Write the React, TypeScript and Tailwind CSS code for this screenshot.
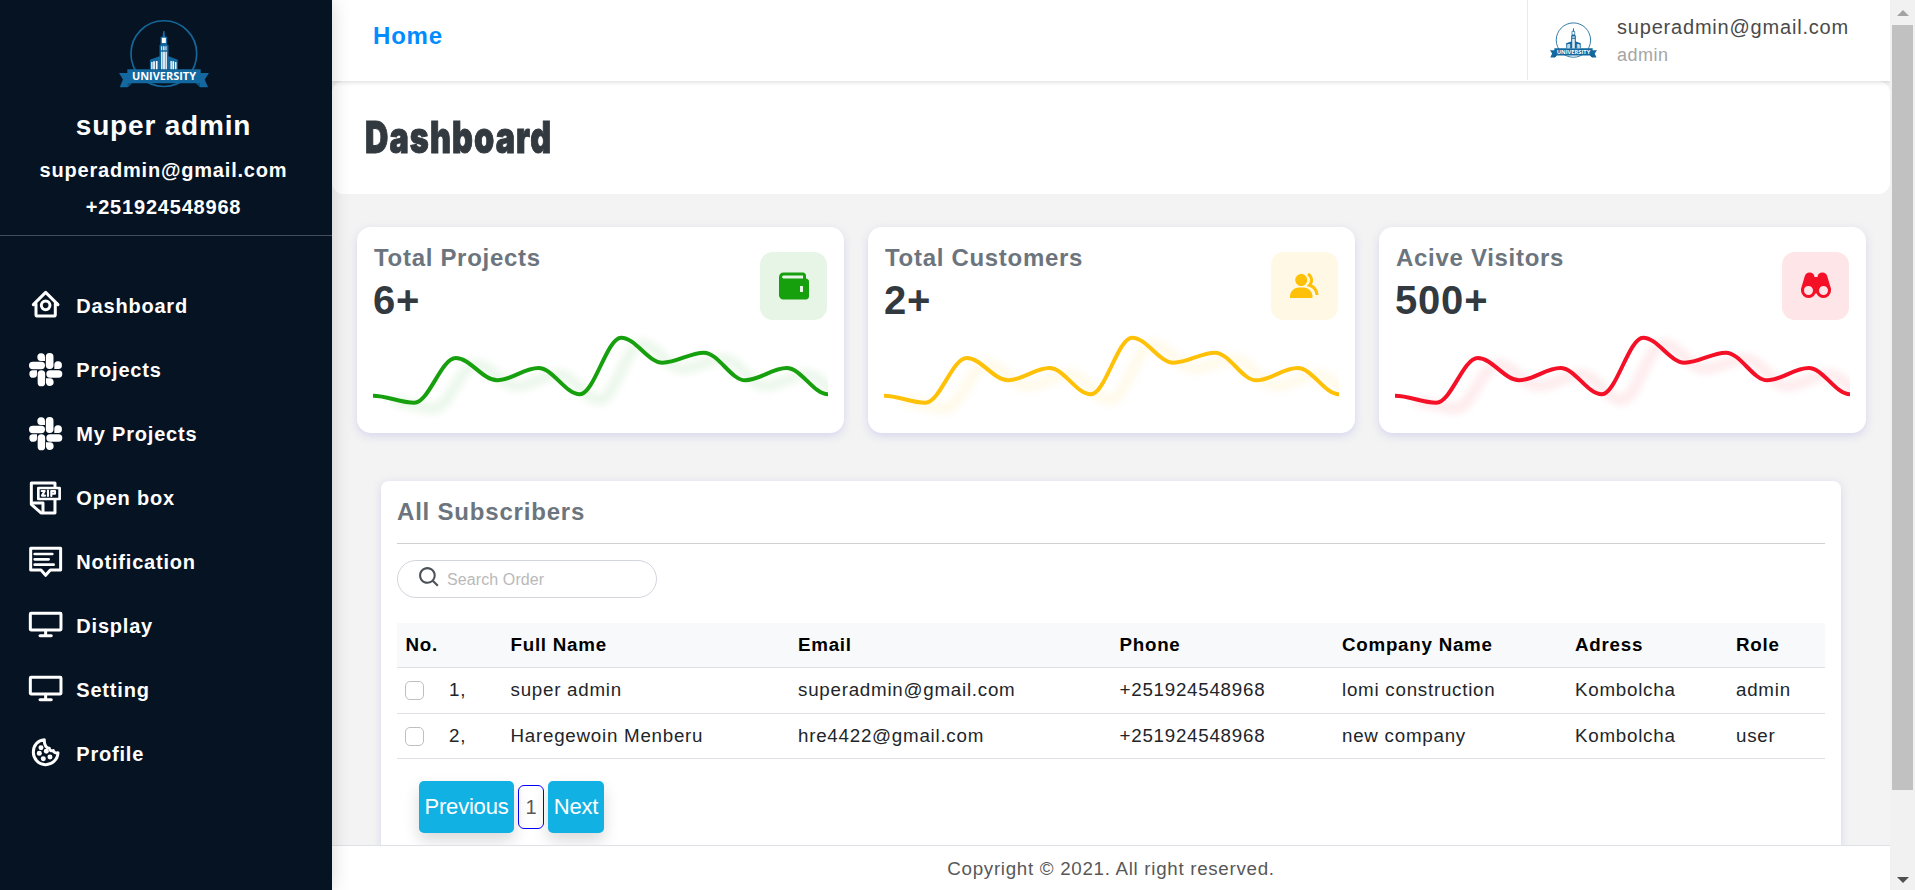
import type { ReactNode } from "react";
import { BiSearch, BiSolidBinoculars, BiSolidGroup, BiSolidWallet } from "react-icons/bi";

function UniversityLogo({ className }: { className: string }) {
  return (
    <svg viewBox="357 58 271 207" className={className}>
      <circle cx="492" cy="162" r="99" fill="none" stroke="#15679a" strokeWidth="5" />
      <path d="M357 220h25v-11h221v11h25l-13 20 10 23h-24l-12-12H395l-12 12h-24l10-23z" fill="#13699f" />
      <path d="M383 251h14l-14 12zM601 251h-14l14 12z" fill="#0c5079" />
      <path
        d="M450 209v-29l29-10v-34h3v-25h6l2-17h4l2 17h6v25h4v34l28 10v29z"
        fill="#13699f"
      />
      <path
        d="M486 114h12v16h-12zM484 140h3v12h-3zM490 140h4v12h-4zM497 140h3v12h-3zM484 156h4v53h-4zM490 156h5v53h-5zM497 156h4v53h-4zM454 187h4v22h-4zM460 185h5v24h-5zM468 184h5v25h-5zM512 184h4v25h-4zM518 185h5v24h-5zM526 187h4v22h-4z"
        fill="#ffffff"
      />
      <text
        x="396"
        y="241"
        fontSize="32"
        fontWeight="700"
        fontFamily="Open Sans, sans-serif"
        letterSpacing="0"
        fill="#ffffff"
        textLength="193"
        lengthAdjust="spacingAndGlyphs"
      >
        UNIVERSITY
      </text>
    </svg>
  );
}

function NavIcon({ children }: { children: ReactNode }) {
  return (
    <svg
      viewBox="0 0 100 100"
      className="size-[33.3px] shrink-0 overflow-visible"
      fill="none"
      stroke="currentColor"
      strokeWidth="9"
      strokeLinecap="round"
      strokeLinejoin="round"
    >
      {children}
    </svg>
  );
}

const HomeIcon = () => (
  <NavIcon>
    <path d="M13 47 50 10l37 37M21 44v33q0 4 4 4h50q4 0 4-4V44" />
    <circle cx="50" cy="49" r="13" />
  </NavIcon>
);

const SlackIcon = () => (
  <NavIcon>
    <g fill="currentColor" stroke="none">
      <rect x="50.5" y="0" width="23" height="48" rx="11" />
      <rect x="0" y="26" width="48" height="22.5" rx="11" />
      <rect x="26" y="51.5" width="22.5" height="48.5" rx="11" />
      <rect x="52" y="51.5" width="48" height="22.5" rx="11" />
      <path d="M48 24H37.5a11.5 11.5 0 1 1 10.5-12zM76 48V37.5a11.5 11.5 0 1 1 12 10.5zM24 51.5v10.5a11.5 11.5 0 1 1-12-10.5zM51 76h10.5a11.5 11.5 0 1 1-10.5 12z" />
    </g>
  </NavIcon>
);

const ZipIcon = () => (
  <NavIcon>
    <path d="M78 17V6H7v64l29 26h42V56" strokeWidth="9" />
    <path d="M9 66h33v28" strokeWidth="9" />
    <rect x="28" y="21" width="64" height="33" strokeWidth="8" />
    <path d="M38 30h9l-8 14h9M57 29v16M67 45V30h11v8H68" strokeWidth="6.5" />
  </NavIcon>
);

const MessageIcon = () => (
  <NavIcon>
    <path d="M5 10h90v65H64L50 91 36 75H5z" />
    <path d="M17 27h53M17 43h42M17 59h57" strokeWidth="8" />
  </NavIcon>
);

const DisplayIcon = () => (
  <NavIcon>
    <rect x="4" y="13" width="92" height="50" rx="2" />
    <path d="M50 64v14M33 80h34" />
  </NavIcon>
);

const CookieIcon = () => (
  <NavIcon>
    <path d="M46 8C27 9 13 25 13 45a37 37 0 0 0 74 2c-6 2-12 0-14-6-7 2-11-1-12-7-8 0-16-9-15-26z" strokeWidth="9" />
    <g fill="currentColor" stroke="none">
      <circle cx="36" cy="32" r="7.5" />
      <circle cx="31" cy="49" r="7.5" />
      <circle cx="52" cy="43" r="7.5" />
      <circle cx="43" cy="65" r="7.5" />
      <circle cx="63" cy="60" r="7.5" />
    </g>
  </NavIcon>
);

const navItems = [
  { label: "Dashboard", icon: <HomeIcon /> },
  { label: "Projects", icon: <SlackIcon /> },
  { label: "My Projects", icon: <SlackIcon /> },
  { label: "Open box", icon: <ZipIcon /> },
  { label: "Notification", icon: <MessageIcon /> },
  { label: "Display", icon: <DisplayIcon /> },
  { label: "Setting", icon: <DisplayIcon /> },
  { label: "Profile", icon: <CookieIcon /> },
];

function Sidebar() {
  return (
    <aside className="z-20 flex w-[332px] shrink-0 flex-col bg-[#061323] font-bold text-white shadow-[0_0_18px_rgba(0,0,0,0.16)]">
      <div className="flex h-[236px] flex-col items-center border-b border-[#434e5c] pt-[19px] pr-[5px]">
        <UniversityLogo className="h-[69px] w-[90px]" />
        <div className="mt-[18px] text-[28px] leading-[40px]">super admin</div>
        <div className="mt-[6px] text-[20px] leading-[37px]">superadmin@gmail.com</div>
        <div className="text-[20px] leading-[37px]">+251924548968</div>
      </div>
      <nav className="flex flex-col pt-[38px] pl-[29px]">
        {navItems.map((item) => (
          <a key={item.label} className="flex h-16 items-center gap-[14px] text-[20px]">
            {item.icon}
            <span>{item.label}</span>
          </a>
        ))}
      </nav>
    </aside>
  );
}

function Header() {
  return (
    <header className="z-10 flex h-[81px] shrink-0 justify-between bg-white shadow-[0_1px_5px_rgba(0,0,0,0.15)]">
      <a className="pt-[20px] pl-[41px] text-[24px] leading-[32px] font-bold text-[#048cff]">Home</a>
      <div className="flex h-[80px] w-[363px] border-l border-[#e9e9e9] pt-[13px] pl-[22px]">
        <UniversityLogo className="mt-[9px] h-[36px] w-[47px]" />
        <div className="ml-[20px]">
          <div className="text-[20px] leading-[28px] text-[#4a4a4a]">superadmin@gmail.com</div>
          <div className="text-[18px] leading-[28px] tracking-[0.5px] text-[#a5a5a5]">admin</div>
        </div>
      </div>
    </header>
  );
}

const trend = [65.7, 72.7, 28, 50.3, 38, 64.3, 7.7, 32.7, 22.7, 50.3, 38, 64.3];

function smoothPath(values: number[], width: number) {
  const step = width / (values.length - 1);
  return values
    .map((y, i) => {
      if (i === 0) return `M0 ${y}`;
      const from = (i - 1) * step;
      const to = i * step;
      return `C${from + step * 0.35} ${values[i - 1]} ${to - step * 0.35} ${y} ${to} ${y}`;
    })
    .join("");
}

function Sparkline({ color }: { color: string }) {
  const d = smoothPath(trend, 455);
  return (
    <svg viewBox="0 0 455 96" className="h-[96px] w-[455px]" fill="none" stroke={color} strokeWidth="4">
      <path d={d} transform="translate(20 6)" strokeWidth="8" className="opacity-[0.11] blur-[4px]" />
      <path d={d} />
    </svg>
  );
}

const stats = [
  { label: "Total Projects", value: "6+", color: "#17a00e", tile: "bg-[#e7f5e6] text-[#17a00e]", icon: <BiSolidWallet /> },
  { label: "Total Customers", value: "2+", color: "#ffc107", tile: "bg-[#fff8e4] text-[#ffc107]", icon: <BiSolidGroup /> },
  { label: "Acive Visitors", value: "500+", color: "#f41127", tile: "bg-[#fee5e7] text-[#f41127]", icon: <BiSolidBinoculars /> },
];

function StatCards() {
  return (
    <div className="mt-[33px] ml-[25px] grid w-[1509px] grid-cols-3 gap-6">
      {stats.map((s) => (
        <section
          key={s.label}
          className="h-[206px] rounded-[14px] bg-white pl-4 shadow-[0_3px_8px_rgba(206,206,238,0.8)]"
        >
          <div className="flex h-[103px] justify-between pr-[17px]">
            <div className="pt-[16px]">
              <h5 className="pl-px text-[24px] leading-[29px] font-bold tracking-[0.7px] text-[#6c757d]">{s.label}</h5>
              <div className="mt-[4px] text-[40px] leading-[48px] font-bold text-[#32393f]">{s.value}</div>
            </div>
            <div className={`mt-[25px] flex h-[68px] w-[67px] items-center justify-center rounded-[13px] text-[36px] ${s.tile}`}>
              {s.icon}
            </div>
          </div>
          <Sparkline color={s.color} />
        </section>
      ))}
    </div>
  );
}

const subscribers = [
  { no: "1,", name: "super admin", email: "superadmin@gmail.com", phone: "+251924548968", company: "lomi construction", address: "Kombolcha", role: "admin" },
  { no: "2,", name: "Haregewoin Menberu", email: "hre4422@gmail.com", phone: "+251924548968", company: "new company", address: "Kombolcha", role: "user" },
];

function Subscribers() {
  return (
    <section className="mt-[48px] ml-[49px] h-[420px] w-[1460px] rounded-[8px] bg-white px-4 pt-[15px] shadow-[0_2px_8px_rgba(206,206,238,0.8)]">
      <h5 className="text-[24px] leading-[32px] font-bold text-[#6c757d]">All Subscribers</h5>
      <div className="mt-[15px] h-px bg-[#d0d0d0]" />
      <div className="mt-[16px] flex h-[38px] w-[260px] items-center rounded-full border border-[#d2d6dc] pl-[19px] text-[16px] tracking-normal text-[#b9b9b9]">
        <BiSearch className="mb-[4px] size-[25px] text-[#4c5258]" />
        <span className="ml-[5px] pt-[1px] tracking-[0.1px]">Search Order</span>
      </div>
      <table className="mt-[25px] w-[1428px] table-fixed border-collapse text-left text-[18.75px] leading-[26px] tracking-[0.75px] text-[#212529]">
        <colgroup>
          <col className="w-[105px]" />
          <col className="w-[287.5px]" />
          <col className="w-[321.5px]" />
          <col className="w-[222.5px]" />
          <col className="w-[233px]" />
          <col className="w-[161px]" />
          <col className="w-[97.5px]" />
        </colgroup>
        <thead className="bg-[#f8f9fa] text-black">
          <tr className="h-[44px] border-b border-[#dee2e6]">
            {["No.", "Full Name", "Email", "Phone", "Company Name", "Adress", "Role"].map((h) => (
              <th key={h} className="py-0 pr-0 pl-[8.5px] font-bold">{h}</th>
            ))}
          </tr>
        </thead>
        <tbody>
          {subscribers.map((s) => (
            <tr key={s.no} className="h-[46px] border-b border-[#dee2e6] last:h-[45px]">
              <td className="px-2 py-0">
                <div className="flex items-center">
                  <span className="mt-px size-[19px] rounded-[5px] border border-[#bfbfbf] bg-white" />
                  <span className="ml-[25px]">{s.no}</span>
                </div>
              </td>
              <td className="py-0 pr-0 pl-[8.5px]">{s.name}</td>
              <td className="py-0 pr-0 pl-[8.5px]">{s.email}</td>
              <td className="py-0 pr-0 pl-[8.5px]">{s.phone}</td>
              <td className="py-0 pr-0 pl-[8.5px]">{s.company}</td>
              <td className="py-0 pr-0 pl-[8.5px]">{s.address}</td>
              <td className="py-0 pr-0 pl-[8.5px]">{s.role}</td>
            </tr>
          ))}
        </tbody>
      </table>
      <div className="mt-[22px] ml-[22px] flex items-center gap-1 tracking-normal">
        <button className="h-[52px] w-[95px] rounded-[5px] bg-[#11b1e4] text-[22px] tracking-[-0.2px] text-white shadow-[0_8px_16px_rgba(0,0,0,0.15)]">Previous</button>
        <span className="flex h-[44px] w-[26px] items-center justify-center rounded-[6px] border border-[#0000ff] text-[20px] text-[#585858]">1</span>
        <button className="h-[52px] w-[56px] rounded-[5px] bg-[#11b1e4] text-[22px] tracking-[-0.2px] text-white shadow-[0_8px_16px_rgba(0,0,0,0.15)]">Next</button>
      </div>
    </section>
  );
}

function Scrollbar() {
  return (
    <div className="z-20 flex w-[25px] shrink-0 flex-col items-center bg-[#f1f1f1]">
      <svg viewBox="0 0 12 6" className="mt-[10px] h-[6px] w-[12px]">
        <path d="M6 0l6 6H0z" fill="#a3a3a3" />
      </svg>
      <div className="mt-[9px] h-[765px] w-[21px] bg-[#c1c1c1]" />
      <svg viewBox="0 0 12 6" className="mt-[87px] h-[6px] w-[12px]">
        <path d="M0 0h12L6 6z" fill="#505050" />
      </svg>
    </div>
  );
}

export default function App() {
  return (
    <div className="flex h-[890px] w-[1915px] overflow-hidden bg-[#f3f3f3] font-['Liberation_Sans',Arial,sans-serif] tracking-[0.8px]">
      <Sidebar />
      <div className="flex min-w-0 flex-1 flex-col">
        <Header />
        <main className="min-h-0 flex-1 overflow-hidden">
          <div className="h-[113px] rounded-[12px] bg-white pt-[32px] pl-[33px]">
            <h1 className="inline-block origin-left scale-x-[0.735] font-[Impact,Inter,sans-serif] text-[44px] leading-[48px] font-black tracking-[1.5px] text-[#32393f] [-webkit-text-stroke:1px_#32393f]">
              Dashboard
            </h1>
          </div>
          <StatCards />
          <Subscribers />
        </main>
        <footer className="z-10 h-[45px] shrink-0 border-t border-[#dee2e6] bg-white pt-[9px] text-center text-[18.75px] leading-[27px] tracking-[0.7px] text-[#585858]">
          Copyright © 2021. All right reserved.
        </footer>
      </div>
      <Scrollbar />
    </div>
  );
}
